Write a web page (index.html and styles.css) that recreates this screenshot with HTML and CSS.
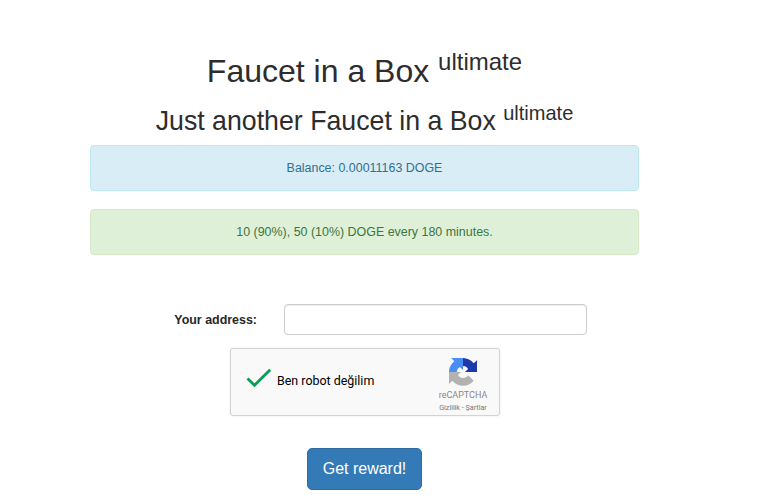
FILE: index.html
```html
<!DOCTYPE html>
<html lang="en">
<head>
<meta charset="utf-8">
<title>Faucet in a Box</title>
<link rel="stylesheet" href="styles.css">
</head>
<body>
<main class="container">
  <h1>Faucet in a Box <sup>ultimate</sup></h1>
  <h2>Just another Faucet in a Box <sup>ultimate</sup></h2>
  <p class="alert info">Balance: 0.00011163 DOGE</p>
  <p class="alert success">10 (90%), 50 (10%) DOGE every 180 minutes.</p>
  <form>
    <div class="field">
      <label for="address">Your address:</label>
      <input id="address" type="text">
    </div>
    <div class="captcha">
      <svg class="check" viewBox="0 0 26 20"><path d="M1.500 10.500 8.500 17.300 24.200 1.800" fill="none" stroke="#0a9d58" stroke-width="2.900"/></svg>
      <span class="captcha-label">Ben robot değilim</span>
      <div class="brand">
        <svg class="logo" viewBox="0 0 64 64">
          <path fill="#1c3aa9" d="M64 32V5l-7.600 7.100A32 32 0 0 0 32 0v18c6 0 9 3 11.500 6.900L36.500 32z"/>
          <path fill="#4a8df5" d="M32 0H5l7.100 7.600A32 32 0 0 0 0 32h18c0-6 3-9 6.900-11.500L32 27.500z"/>
          <path fill="#b2b2b2" d="M0 32v27.500l7.600-7.600A32 32 0 0 0 56.500 52L43.700 39.200A13.500 13.500 0 0 1 20.500 39.100L27.500 32z"/>
        </svg>
        <span class="name">reCAPTCHA</span>
        <span class="links">Gizlilik - Şartlar</span>
      </div>
    </div>
    <button type="button">Get reward!</button>
  </form>
</main>
</body>
</html>
```
FILE: styles.css
```css
* { box-sizing: border-box; }
body {
  margin: 0;
  background: #fff;
  color: #333;
  font: 12.45px/18px "Liberation Sans", Arial, sans-serif;
}
.container {
  width: 549px;
  margin-left: 90px;
  padding-top: 50px;
  text-align: center;
}
h1, h2 { margin: 0; font-weight: 400; line-height: 36px; white-space: nowrap; color: #2d2d2d; }
h1 { height: 53px; font-size: 32px; line-height: 42px; }
h2 { height: 42px; font-size: 26.72px; }
sup { position: relative; top: -.5em; font-size: 75%; line-height: 0; vertical-align: baseline; }
.alert {
  height: 46px;
  margin: 0 0 18px;
  padding: 13px;
  border: 1px solid;
  border-radius: 4px;
}
.info { color: #31708f; background: #d9edf7; border-color: #bce8f1; }
.success { color: #3c763d; background: #dff0d8; border-color: #d6e9c6; }
form { display: flex; flex-direction: column; align-items: center; padding-top: 31px; }
.field { display: flex; align-items: center; align-self: stretch; height: 31px; }
label { width: 167px; margin-right: 27px; text-align: right; font-weight: 700; font-size: 12.45px; color: #282828; }
input {
  width: 303px;
  height: 31px;
  border: 1px solid #ccc;
  border-radius: 4px;
  box-shadow: inset 0 1px 1px rgba(0,0,0,.075);
}
.captcha {
  display: flex;
  width: 270px;
  height: 68px;
  margin: 13px 0 32px;
  padding-left: 15px;
  border: 1px solid #d3d3d3;
  border-radius: 3px;
  background: #f9f9f9;
  box-shadow: 0 0 3px rgba(0,0,0,.08);
  font-family: Roboto, sans-serif;
  text-align: left;
}
.check { width: 26px; height: 20px; margin-top: 19px; }
.captcha-label { margin: 23px 0 0 5.500px; font-size: 12.45px; color: #000; white-space: nowrap; }
.brand { display: flex; flex-direction: column; align-items: center; width: 60px; margin-left: auto; margin-right: 5.500px; padding-top: 9px; }
.logo { width: 28px; height: 28px; }
.name { margin-top: 4px; font: 9px/11px Roboto, sans-serif; color: #888; }
.links { margin-top: 2px; font-size: 7.2px; line-height: 9px; color: #777; white-space: nowrap; }
button {
  width: 115px;
  height: 42px;
  padding: 0;
  border: 1px solid #2e6da4;
  border-radius: 5px;
  background: #337ab7;
  color: #fff;
  font: 16px/24px "Liberation Sans", Arial, sans-serif;
}
```
